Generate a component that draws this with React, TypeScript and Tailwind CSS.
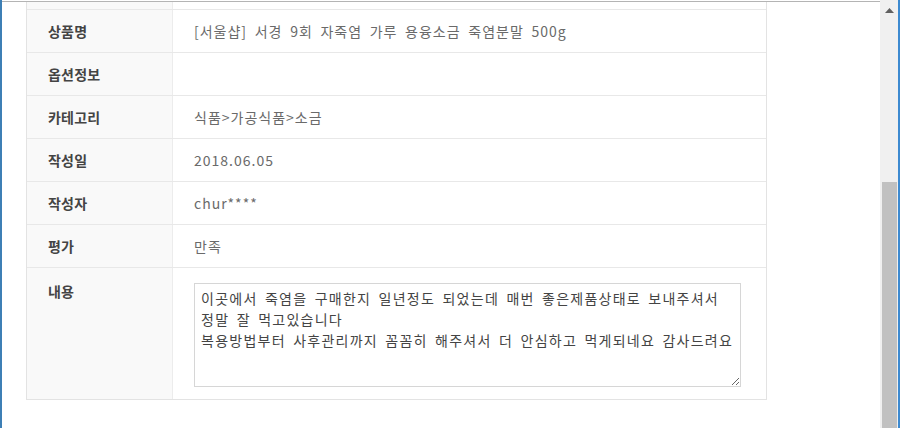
import React from "react";

const rows: { label: string; value: string }[] = [
  { label: "상품명", value: "[서울샵] 서경 9회 자죽염 가루 용융소금 죽염분말 500g" },
  { label: "옵션정보", value: "" },
  { label: "카테고리", value: "식품>가공식품>소금" },
  { label: "작성일", value: "2018.06.05" },
  { label: "작성자", value: "chur****" },
  { label: "평가", value: "만족" },
];

const content =
  "이곳에서 죽염을 구매한지 일년정도 되었는데 매번 좋은제품상태로 보내주셔서\n정말 잘 먹고있습니다\n복용방법부터 사후관리까지 꼼꼼히 해주셔서 더 안심하고 먹게되네요 감사드려요";

export default function App() {
  return (
    <div
      className="flex w-[900px] h-[428px] overflow-hidden bg-white"
      style={{ fontFamily: '"Noto Sans CJK KR", "Noto Sans", sans-serif' }}
    >
      <div className="w-[2px] h-full bg-[#3d7fb5]" />
      <div className="flex-1 flex flex-col">
        <div className="h-px bg-white" />
        <div className="h-px bg-[#b4b4b4]" />
        <div className="pl-[24px]">
          <div className="w-[741px] border-x border-b border-[#e3e3e3]">
            <div className="flex h-[8px] border-b border-[#e8e8e8]">
              <div className="w-[146px] bg-[#f9f9f9] border-r border-[#ececec]" />
              <div className="flex-1" />
            </div>
            {rows.map((r) => (
              <div key={r.label} className="flex h-[43px] border-b border-[#e8e8e8]">
                <div className="w-[146px] bg-[#f9f9f9] border-r border-[#ececec] flex items-center pl-[21px] text-[14px] tracking-[0.2px] font-bold text-[#444]">
                  {r.label}
                </div>
                <div className="flex-1 flex items-center pl-[21px] text-[14px] tracking-[1px] [word-spacing:3.5px] text-[#6a6a6a]">
                  {r.value}
                </div>
              </div>
            ))}
            <div className="flex h-[131px]">
              <div className="w-[146px] bg-[#f9f9f9] border-r border-[#ececec] pl-[21px] pt-[13px] text-[14px] tracking-[0.2px] font-bold text-[#444]">
                내용
              </div>
              <div className="flex-1 pl-[21px] pt-[15px]">
                <textarea
                  readOnly
                  defaultValue={content}
                  className="block w-[547px] h-[104px] border border-[#d6d6d6] px-[6px] pt-[4px] text-[14px] leading-[21px] tracking-[1.25px] [word-spacing:3px] text-[#444] resize outline-none"
                  style={{ fontFamily: '"Noto Sans CJK KR", "Noto Sans", sans-serif' }}
                />
              </div>
            </div>
          </div>
        </div>
      </div>
      <div className="w-[18px] h-full bg-[#f0f0f0] flex flex-col items-center">
        <div className="h-[182px] w-full flex justify-center pt-[8px]">
          <svg width="9" height="5" viewBox="0 0 9 5">
            <polygon points="0,5 9,5 4.5,0" fill="#606060" />
          </svg>
        </div>
        <div className="flex-1 w-[15px] bg-[#c1c1c1]" />
      </div>
      <div className="w-[2px] h-full bg-[#3d8ad0]" />
    </div>
  );
}
